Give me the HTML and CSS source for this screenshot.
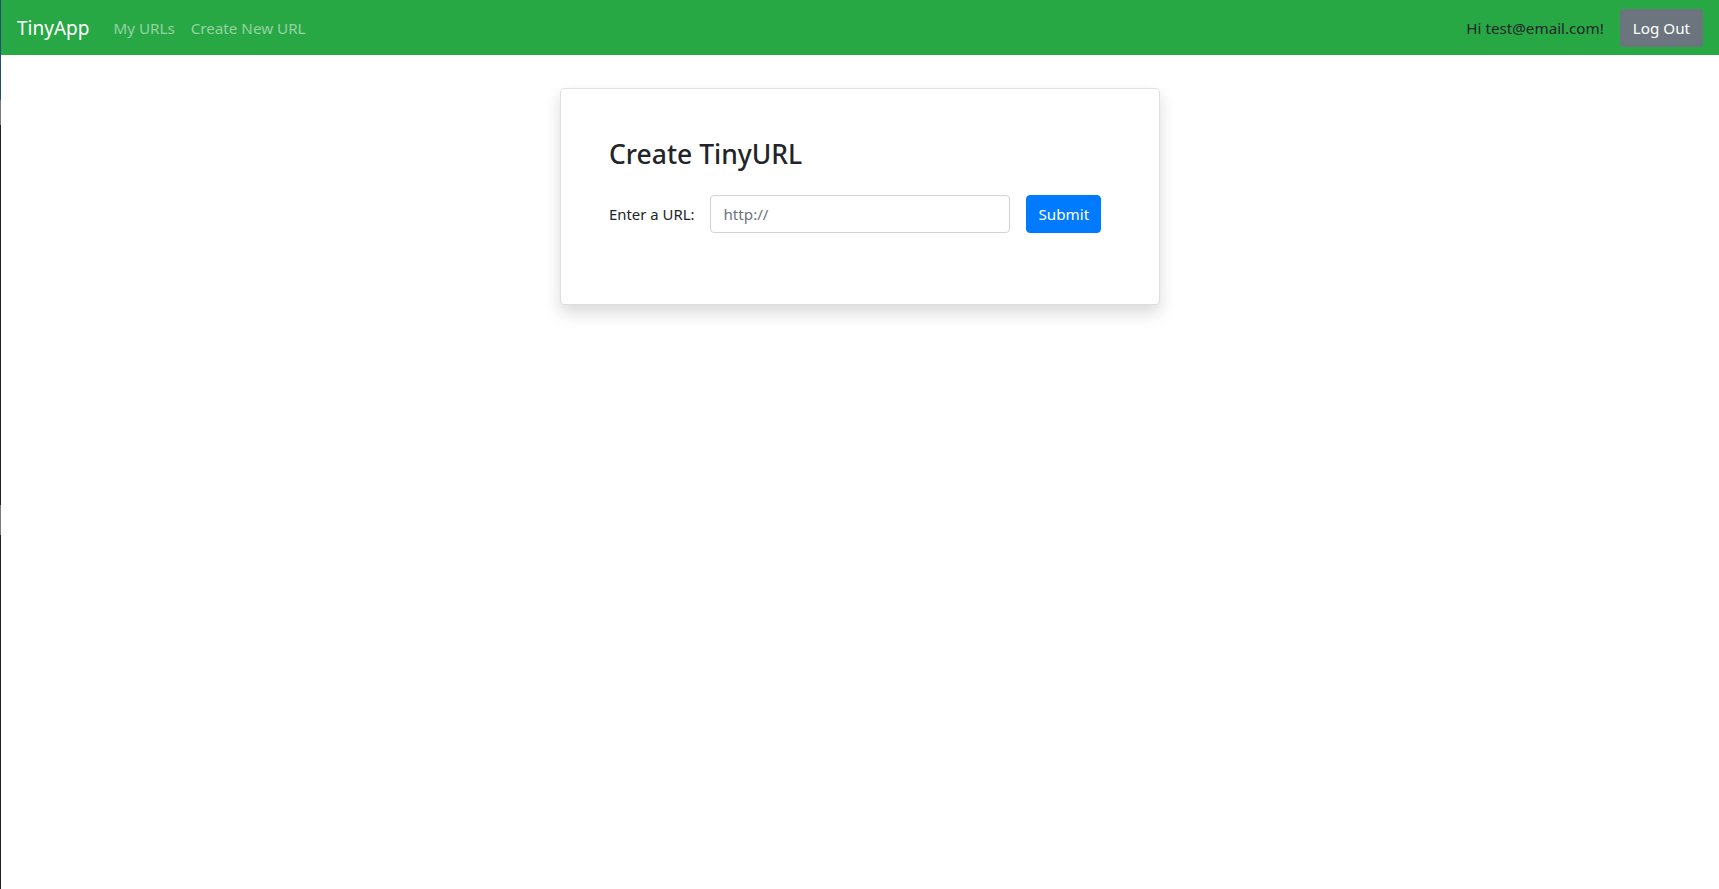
FILE: index.html
```html
<!DOCTYPE html>
<html lang="en">
<head>
<meta charset="utf-8">
<title>TinyApp</title>
<link rel="stylesheet" href="styles.css">
</head>
<body>
<div class="edge"></div>
<nav class="navbar">
  <div class="nav-left">
    <a class="brand" href="#">TinyApp</a>
    <a class="nav-link" href="#">My URLs</a>
    <a class="nav-link" href="#">Create New URL</a>
  </div>
  <div class="nav-right">
    <span class="greeting">Hi test@email.com!</span>
    <button class="btn btn-logout" type="button">Log Out</button>
  </div>
</nav>
<main class="main">
  <section class="card">
    <h3 class="card-title">Create TinyURL</h3>
    <form class="url-form">
      <label class="url-label" for="longURL">Enter a URL:</label>
      <input class="url-input" id="longURL" type="text" placeholder="http://">
      <button class="btn btn-submit" type="button">Submit</button>
    </form>
  </section>
</main>
</body>
</html>
```
FILE: styles.css
```css
html, body {
  margin: 0;
  padding: 0;
  height: 100%;
}
body {
  font-family: "Noto Sans", "Open Sans", sans-serif;
  font-size: 15.2px;
  color: #212529;
  background: #fff;
  border-left: 1px solid #222;
  box-sizing: border-box;
}
.edge {
  position: fixed;
  left: 0;
  top: 0;
  width: 1px;
  height: 100%;
  background: linear-gradient(to bottom,
    #1f4e79 0, #1f4e79 100px,
    #7a7a7a 100px, #7a7a7a 125px,
    #202020 125px, #202020 505px,
    #7a7a7a 505px, #7a7a7a 535px,
    #202020 535px);
}
.navbar {
  display: flex;
  align-items: center;
  justify-content: space-between;
  background: #28a745;
  height: 55px;
  padding: 0 16px;
  box-sizing: border-box;
}
.nav-left, .nav-right {
  display: flex;
  align-items: center;
}
.brand {
  color: #fff;
  font-size: 19px;
  text-decoration: none;
  margin-right: 16px;
  line-height: 30px;
}
.nav-link {
  color: rgba(255, 255, 255, 0.5);
  text-decoration: none;
  padding: 0 8px;
  line-height: 24px;
}
.greeting {
  color: #212529;
  margin-right: 16px;
  white-space: nowrap;
}
.btn {
  font-family: inherit;
  font-size: 15.2px;
  line-height: 24px;
  padding: 6px 12px;
  border: 1px solid transparent;
  border-radius: 4px;
  color: #fff;
  cursor: pointer;
  white-space: nowrap;
  flex-shrink: 0;
}
.btn-logout {
  background: #6c757d;
  border-color: #6c757d;
  height: 38px;
}
.main {
  display: flex;
  justify-content: center;
  padding-top: 33px;
}
.card {
  width: 600px;
  box-sizing: border-box;
  border: 1px solid rgba(0, 0, 0, 0.125);
  border-radius: 5px;
  padding: 48px;
  background: #fff;
  box-shadow: 0 8px 16px rgba(0, 0, 0, 0.15);
}
.card-title {
  margin: 0 0 24px;
  font-size: 26.5px;
  font-weight: 500;
  line-height: 34px;
}
.url-form {
  display: flex;
  align-items: center;
  margin-bottom: 23px;
}
.url-label {
  font-size: 14.9px;
  margin-right: 16px;
  white-space: nowrap;
  flex-shrink: 0;
}
.url-input {
  width: 300px;
  flex-shrink: 0;
  height: 38px;
  box-sizing: border-box;
  border: 1px solid #ced4da;
  border-radius: 4px;
  padding: 6px 12px;
  font-family: inherit;
  font-size: 15.2px;
  color: #495057;
}
.url-input::placeholder {
  color: #6c757d;
}
.btn-submit {
  margin-left: 16px;
  background: #007bff;
  border-color: #007bff;
  height: 38px;
  padding: 6px 11px;
}
```
